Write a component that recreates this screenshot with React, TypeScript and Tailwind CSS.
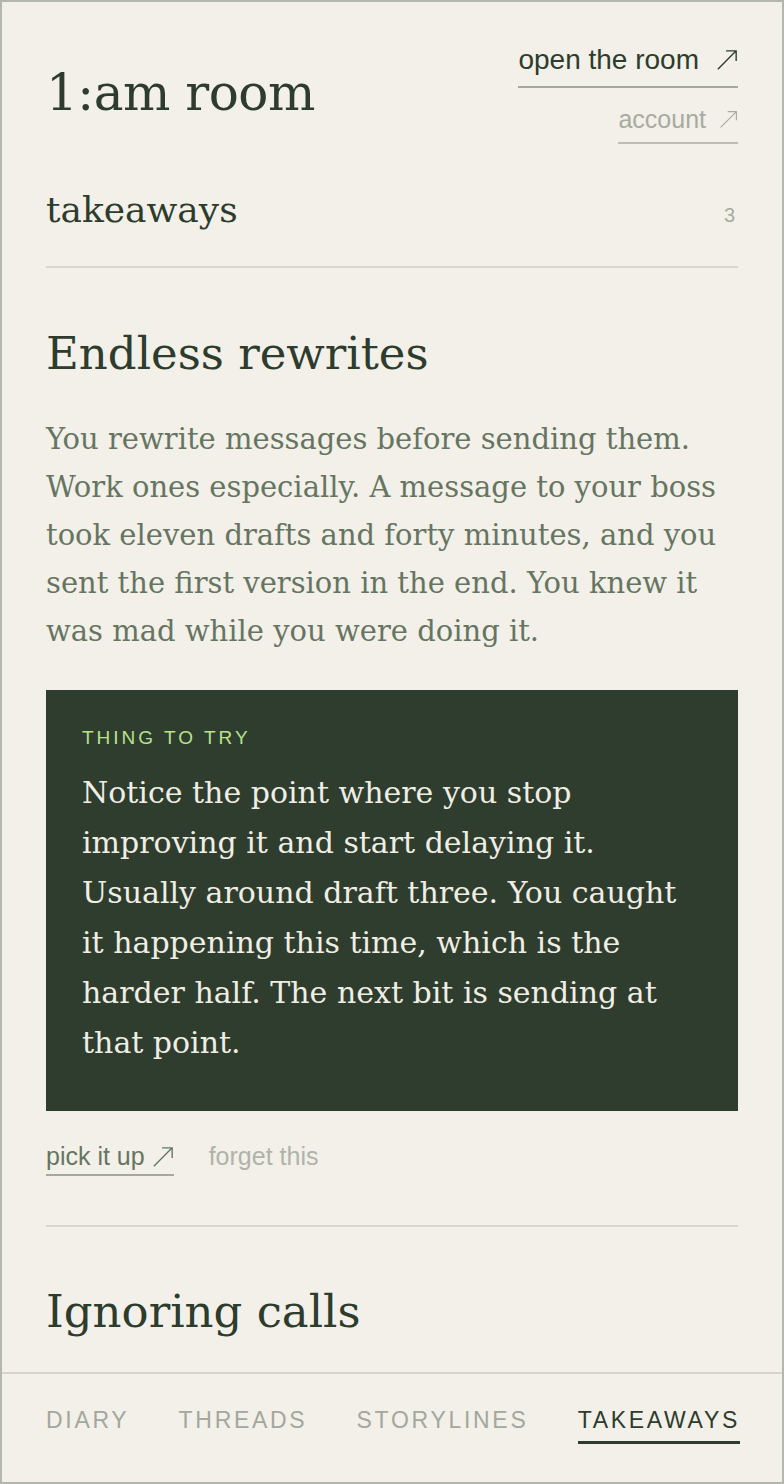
import React from 'react'

const serif = "font-['DejaVu_Serif',serif]"
const sans = "font-['Liberation_Sans',Arial,sans-serif]"

function Arrow({ className }: { className?: string }) {
  return (
    <svg viewBox="0 0 24 24" fill="none" stroke="currentColor" strokeWidth={1.5} className={className}>
      <path d="M2 22L22 2M11 2h11v11" />
    </svg>
  )
}

const tabs = ['DIARY', 'THREADS', 'STORYLINES', 'TAKEAWAYS']

export default function App() {
  return (
    <div className="h-screen flex flex-col border-2 border-[#b4b7ad] bg-[#f2f0e8] text-[#2d3c2c] overflow-hidden">
      <main className="flex-1 min-h-0 overflow-hidden px-[44px]">
        {/* header */}
        <header className="flex justify-between items-start pt-[41px]">
          <h1 className={`${serif} text-[50px] leading-[50px] mt-[25px] tracking-[-0.5px]`}>1:am room</h1>
          <div className={`${sans} flex flex-col items-end`}>
            <a className="flex items-center gap-[17px] text-[28px] leading-[34px] pb-[9px] border-b-2 border-[#a4a89f]">
              open the room
              <Arrow className="w-[22px] h-[22px]" />
            </a>
            <a className="flex items-center gap-[13px] text-[25px] leading-[29px] mt-[17px] pb-[8px] border-b-2 border-[#bcbeb6] text-[#a7aba2]">
              account
              <Arrow className="w-[19px] h-[19px]" />
            </a>
          </div>
        </header>

        {/* section title */}
        <div className="flex justify-between items-baseline mt-[44px] pb-[35px] border-b-2 border-[#d8d7ce]">
          <h2 className={`${serif} text-[36px] leading-[43px]`}>takeaways</h2>
          <span className={`${sans} text-[20px] text-[#a7aba2] pr-[3px]`}>3</span>
        </div>

        {/* takeaway 1 */}
        <article className="pt-[58px]">
          <h3 className={`${serif} text-[45px] leading-[55px]`}>Endless rewrites</h3>
          <p className={`${serif} text-[29px] leading-[48px] text-[#667562] mt-[34px]`}>
            You rewrite messages before sending them. Work ones especially. A message to your boss took eleven drafts and
            forty minutes, and you sent the first version in the end. You knew it was mad while you were doing it.
          </p>
          <div className="bg-[#2e3d2e] mt-[35px] pt-[36px] pb-[43px] px-[36px]">
            <div className={`${sans} text-[19px] leading-[23px] tracking-[3px] text-[#b9e28c]`}>THING TO TRY</div>
            <p className={`${serif} text-[30px] leading-[50px] text-[#f0eee4] mt-[19px]`}>
              Notice the point where you stop improving it and start delaying it. Usually around draft three. You caught
              it happening this time, which is the harder half. The next bit is sending at that point.
            </p>
          </div>
          <div className={`${sans} flex items-start gap-[35px] mt-[31px] text-[25px] leading-[29px]`}>
            <a className="flex items-center gap-[7px] pb-[3px] border-b-2 border-[#a4a89f] text-[#667562]">
              pick it up
              <Arrow className="w-[22px] h-[22px]" />
            </a>
            <a className="text-[#b0b3aa]">forget this</a>
          </div>
        </article>

        <div className="mt-[49px] h-[2px] bg-[#d8d7ce]" />

        {/* takeaway 2 */}
        <article className="pt-[57px]">
          <h3 className={`${serif} text-[45px] leading-[55px]`}>Ignoring calls</h3>
        </article>
      </main>

      {/* bottom nav */}
      <nav className={`${sans} shrink-0 h-[110px] border-t-2 border-[#d6d5cc] px-[44px] pt-[32px] flex justify-between items-start`}>
        {tabs.map(t => (
          <a
            key={t}
            className={
              t === 'TAKEAWAYS'
                ? 'text-[23px] leading-[28px] tracking-[2.7px] pb-[7px] border-b-[3px] border-[#2d3c2c] text-[#2d3c2c] mr-[-2px]'
                : 'text-[23px] leading-[28px] tracking-[2.7px] pb-[7px] border-b-[3px] border-transparent text-[#a3a79e]'
            }
          >
            {t}
          </a>
        ))}
      </nav>
    </div>
  )
}
